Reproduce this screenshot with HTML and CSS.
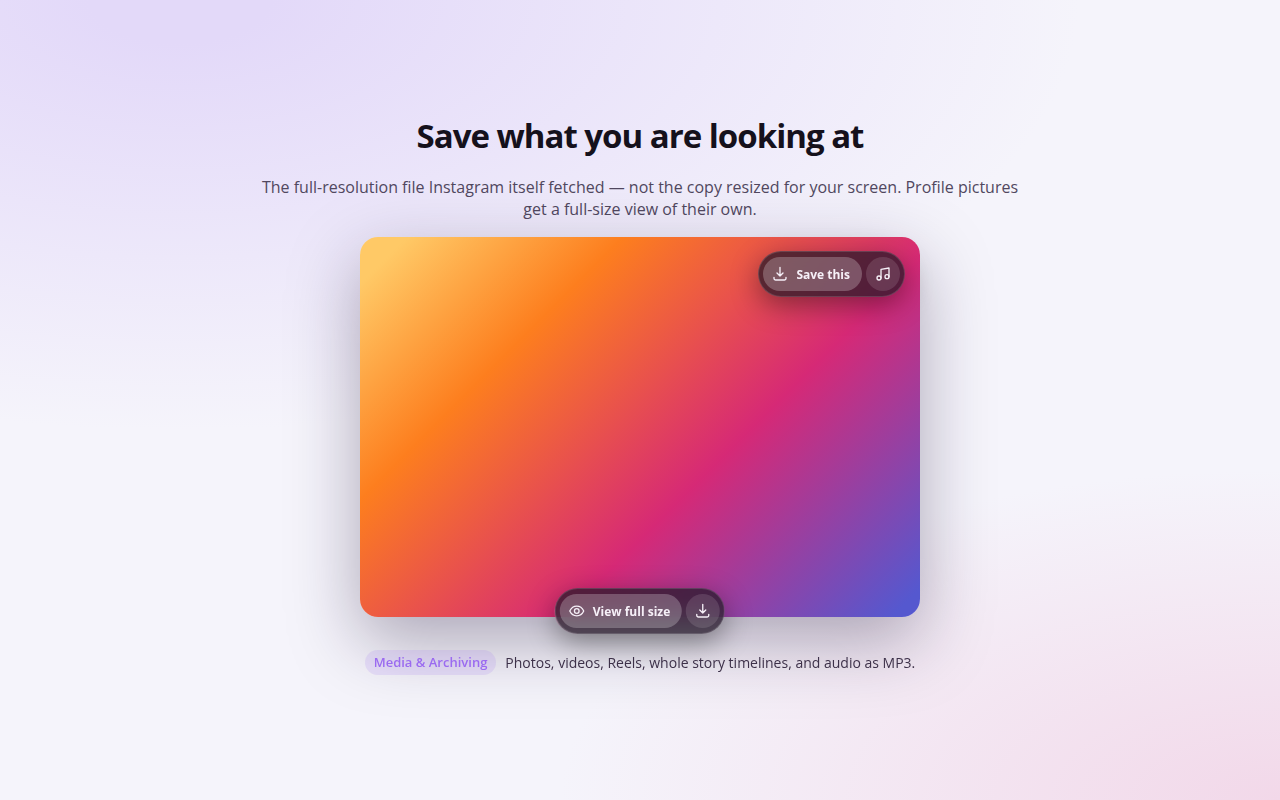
FILE: index.html
```html
<!DOCTYPE html>
<html lang="en">

<head>
  <meta charset="UTF-8" />
  <meta name="viewport" content="width=device-width, initial-scale=1.0" />
  <title>Save what you are looking at</title>
  <link rel="stylesheet" href="styles.css">
</head>

<body>
  <main class="promo">
    <h1>Save what you are looking at</h1>
    <p class="lead">The full-resolution file Instagram itself fetched — not the copy resized for your screen. Profile pictures get a full-size view of their own.</p>

    <div class="photo">
      <div class="pill pill-top">
        <button class="pill-main" type="button">
          <svg viewBox="0 0 24 24"><path d="M12 2v13M7.500 10.500 12 15l4.500-4.500M3 17v1.500a2.500 2.500 0 0 0 2.500 2.500h13a2.500 2.500 0 0 0 2.500-2.500V17" /></svg>
          Save this
        </button>
        <button class="pill-icon" type="button" aria-label="Save audio">
          <svg viewBox="0 0 24 24"><path d="M9 18V5l12-2v13" /><circle cx="6" cy="18" r="3" /><circle cx="18" cy="16" r="3" /></svg>
        </button>
      </div>
      <div class="pill pill-bottom">
        <button class="pill-main" type="button">
          <svg viewBox="0 0 24 24"><path d="M1.500 12S5 4.800 12 4.800 22.500 12 22.500 12 19 19.200 12 19.200 1.500 12 1.500 12z" /><circle cx="12" cy="12" r="3.500" /></svg>
          View full size
        </button>
        <button class="pill-icon" type="button" aria-label="Download">
          <svg viewBox="0 0 24 24"><path d="M12 2v13M7.500 10.500 12 15l4.500-4.500M3 17v1.500a2.500 2.500 0 0 0 2.500 2.500h13a2.500 2.500 0 0 0 2.500-2.500V17" /></svg>
        </button>
      </div>
    </div>

    <div class="caption">
      <span class="tag">Media &amp; Archiving</span>
      <p>Photos, videos, Reels, whole story timelines, and audio as MP3.</p>
    </div>
  </main>
</body>

</html>
```
FILE: styles.css
```css
* {
  box-sizing: border-box;
}

body {
  margin: 0;
  min-height: 100vh;
  display: flex;
  align-items: center;
  justify-content: center;
  font-family: "Segoe UI", "Open Sans", "Noto Sans", sans-serif;
  color: #15111c;
  background:
    radial-gradient(900px 430px at 14% 0, #e3d9f9 10%, rgba(227, 217, 249, 0)),
    radial-gradient(720px 330px at 100% 100%, #f2d8e9, rgba(242, 216, 233, 0)),
    #f5f4fb;
}

.promo {
  width: 100%;
  max-width: 780px;
  display: flex;
  flex-direction: column;
  align-items: center;
  text-align: center;
}

h1 {
  margin: 0 0 20px;
  font-size: 33px;
  line-height: 40px;
  font-weight: 700;
  letter-spacing: -1px;
}

.lead {
  margin: 0 0 17px;
  font-size: 16px;
  line-height: 22px;
  color: #51485f;
}

.photo {
  position: relative;
  width: 100%;
  max-width: 560px;
  height: 380px;
  border-radius: 18px;
  background: linear-gradient(135deg, #ffc966 5%, #fd7e1e 28%, #d62976 62%, #5558cf 97%);
  box-shadow: 0 24px 70px rgba(30, 16, 50, 0.34);
}

.pill {
  position: absolute;
  display: flex;
  gap: 4px;
  padding: 5px 4px;
  border: 1px solid rgba(255, 255, 255, 0.14);
  border-radius: 23px;
  background: rgba(32, 24, 38, 0.72);
  backdrop-filter: blur(12px);
  box-shadow: 0 8px 28px rgba(0, 0, 0, 0.4);
}

.pill-top {
  top: 14px;
  right: 15px;
}

.pill-bottom {
  bottom: -17px;
  left: 50%;
  transform: translateX(-50%);
}

.pill button {
  height: 34px;
  border: none;
  border-radius: 17px;
  font-family: inherit;
  color: #f6f0f8;
  cursor: pointer;
  display: flex;
  align-items: center;
  justify-content: center;
}

.pill-main {
  gap: 8px;
  padding: 0 12px 0 9px;
  font-size: 12px;
  font-weight: 700;
  white-space: nowrap;
  background: rgba(255, 255, 255, 0.24);
}

.pill-icon {
  width: 34px;
  padding: 0;
  background: rgba(255, 255, 255, 0.12);
}

.pill svg {
  width: 16px;
  height: 16px;
  flex: none;
  fill: none;
  stroke: currentColor;
  stroke-width: 2;
  stroke-linecap: round;
  stroke-linejoin: round;
}

.caption {
  position: relative;
  margin-top: 33px;
  padding-bottom: 9px;
  display: flex;
  align-items: center;
  gap: 9px;
}

.caption p {
  margin: 0;
  font-size: 14px;
  line-height: 24px;
  color: #3d3149;
}

.tag {
  padding: 0 9px;
  border-radius: 13px;
  font-size: 13px;
  line-height: 25px;
  font-weight: 600;
  color: #9b6bf0;
  background: rgba(155, 107, 240, 0.15);
}
```
